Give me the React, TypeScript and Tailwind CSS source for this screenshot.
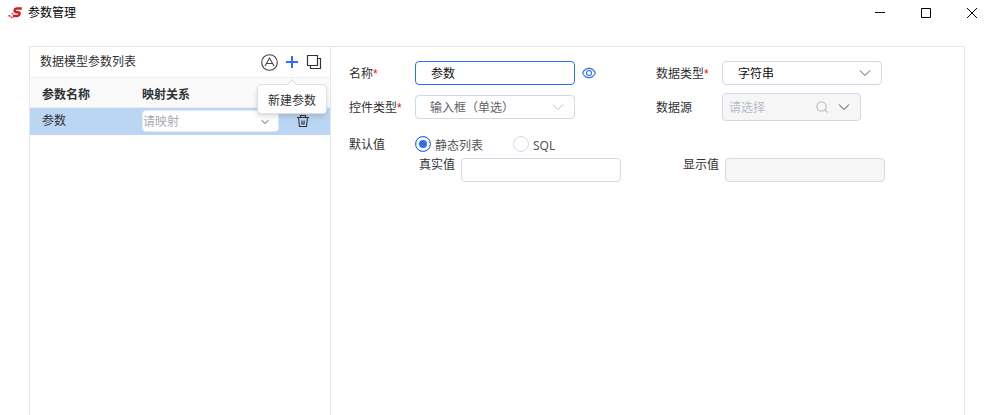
import { useState } from "react";
import type { ReactNode } from "react";
import clsx from "clsx";

type ChevronProps = { className?: string };

function Chevron({ className }: ChevronProps) {
  return (
    <svg viewBox="0 0 12 12" fill="none" stroke="currentColor" className={clsx("pointer-events-none", className)}>
      <path d="M1 3.5 6 8.5 11 3.5" />
    </svg>
  );
}

function Logo() {
  return (
    <svg width="14" height="14" viewBox="0 0 14 14" fill="none" aria-hidden="true">
      <path d="M13.8 2.4H8.6Q7 2.4 6.7 4T8 6.2H10.2Q11.9 6.2 11.5 8T9.6 10H5" stroke="#d01f26" strokeWidth="2.5" />
      <path d="M3.6 7h1.8v1.6H3.6zM.4 9h2v1.8h-2zM2.6 10.4h2v1.8h-2z" fill="#d8444a" />
    </svg>
  );
}

function TitleBar() {
  return (
    <header className="flex h-[25px] items-center justify-between pl-2 pr-[9px] text-black">
      <div className="flex items-center gap-1.5">
        <Logo />
        <h1 className="text-xs">参数管理</h1>
      </div>
      <div className="flex items-center gap-[26px]">
        <button type="button" aria-label="最小化" className="flex h-6 w-5 items-center justify-center">
          <svg width="10" height="10" viewBox="0 0 10 10" stroke="currentColor">
            <path d="M0 4.5h10" />
          </svg>
        </button>
        <button type="button" aria-label="最大化" className="flex h-6 w-5 items-center justify-center">
          <svg width="10" height="10" viewBox="0 0 10 10" fill="none" stroke="currentColor">
            <path d="M.5.5h9v9h-9z" />
          </svg>
        </button>
        <button type="button" aria-label="关闭" className="flex h-6 w-5 items-center justify-center">
          <svg width="10" height="10" viewBox="0 0 10 10" fill="none" stroke="currentColor">
            <path d="M0 0l10 10M10 0 0 10" />
          </svg>
        </button>
      </div>
    </header>
  );
}

function ParamList() {
  return (
    <aside className="w-[301px] shrink-0 border-r border-[#e4e7ed]">
      <div className="flex h-[31px] items-center justify-between border-b border-[#ebeef5] pl-2.5 pr-2">
        <h2>数据模型参数列表</h2>
        <div className="flex items-center gap-1.5">
          <button type="button" aria-label="自动映射">
            <svg width="17" height="17" viewBox="0 0 17 17" fill="none" stroke="#444">
              <circle cx="8.5" cy="8.5" r="7.8" strokeWidth="1.1" />
              <path d="M4 12 8.5 4l4.500 8M6 9.500h5" strokeWidth="1.1" />
            </svg>
          </button>
          <div className="relative flex">
            <button type="button" aria-label="新建" aria-describedby="create-tip" className="px-0.5">
              <svg width="12" height="12" viewBox="0 0 12 12" fill="none" stroke="#2f6bff" strokeWidth="2">
                <path d="M6 0v12M0 6h12" />
              </svg>
            </button>
            <div
              id="create-tip"
              role="tooltip"
              className="absolute left-1/2 top-full z-10 mt-4 -translate-x-1/2 whitespace-nowrap rounded border border-[#dcdfe6] bg-white px-2.5 pb-1 pt-2 text-xs leading-4 shadow-md"
            >
              <span className="absolute left-1/2 -top-1 size-2 -translate-x-1/2 rotate-45 border-l border-t border-[#dcdfe6] bg-white" />
              新建参数
            </div>
          </div>
          <button type="button" aria-label="复制">
            <svg width="16" height="16" viewBox="0 0 16 16" fill="none" stroke="#333" strokeWidth="1.2">
              <path d="M1.5 1.5h10v10h-10zM11.5 4.5h3v10h-10v-3" />
            </svg>
          </button>
        </div>
      </div>
      <table className="w-full table-fixed text-left">
        <thead>
          <tr className="h-[29px] border-b border-[#ebeef5] bg-[#fafafa]">
            <th className="w-28 pl-3 pt-1.5 font-bold">参数名称</th>
            <th className="pt-1.5 font-bold">映射关系</th>
            <th className="w-[51px]" aria-label="操作" />
          </tr>
        </thead>
        <tbody>
          <tr className="h-7 bg-[#bad6f3]">
            <td className="pl-3">参数</td>
            <td>
              <div className="relative">
                <select
                  aria-label="映射关系"
                  defaultValue=""
                  className="block h-[22px] w-full appearance-none rounded border border-[#e4e7ed] bg-white pt-0.5 text-[#a8abb2]"
                >
                  <option value="">请映射</option>
                </select>
                <Chevron className="absolute right-2.5 top-2 size-2 stroke-2 text-[#a0a3aa]" />
              </div>
            </td>
            <td className="pl-[17px]">
              <button type="button" aria-label="删除" className="block">
                <svg width="14" height="14" viewBox="0 0 14 14" fill="none" stroke="#333" strokeWidth="1.1">
                  <path d="M1 3.5h12M4.5 3.5v-2h5v2M2.5 3.5 3.5 12.5h7l1-9M5.9 6.5v3.500h2.200V6.500" />
                </svg>
              </button>
            </td>
          </tr>
        </tbody>
      </table>
    </aside>
  );
}

type FieldProps = {
  label: string;
  htmlFor: string;
  required?: boolean;
  children: ReactNode;
};

function Field({ label, htmlFor, required, children }: FieldProps) {
  return (
    <div className="flex items-center">
      <label htmlFor={htmlFor} className="w-[66px] shrink-0 pt-0.5">
        {label}
        {required && <span className="font-['Liberation_Sans',sans-serif] text-[#f00]">*</span>}
      </label>
      {children}
    </div>
  );
}

const control = "h-6 w-40 rounded border border-[#d5d8e6]";

function ParamForm() {
  const [name, setName] = useState("参数");
  const [source, setSource] = useState("static");

  const radioClass =
    "size-4 appearance-none rounded-full border border-[#d5d8e6] bg-white checked:border-[#2f6bff] checked:bg-[#2f6bff] checked:shadow-[inset_0_0_0_3px_white]";

  return (
    <form className="min-w-0 flex-1 px-[18px] pt-3.5">
      <div className="grid grid-cols-[307px_1fr] gap-y-2">
        <Field label="名称" htmlFor="name" required>
          <input
            id="name"
            value={name}
            onChange={(e) => setName(e.target.value)}
            className="h-6 w-40 rounded border border-[#2f6bff] px-[15px] text-[#111] outline-none"
          />
          <button type="button" aria-label="预览" className="ml-[7px]">
            <svg width="14" height="14" viewBox="0 0 14 14" fill="none" stroke="#2f6bff" strokeWidth="1.1">
              <path d="M.6 7C3.5.8 10.5.8 13.4 7 10.5 13.2 3.5 13.2.6 7z" />
              <circle cx="7" cy="7" r="2.5" />
            </svg>
          </button>
        </Field>
        <Field label="数据类型" htmlFor="data-type" required>
          <div className="relative">
            <select id="data-type" className={clsx(control, "block appearance-none bg-white px-[15px] pt-0.5 text-[#111]")}>
              <option>字符串</option>
            </select>
            <Chevron className="absolute right-[11px] top-1.5 size-3 text-[#555]" />
          </div>
        </Field>
        <Field label="控件类型" htmlFor="control-type" required>
          <div className="relative">
            <select id="control-type" className={clsx(control, "block appearance-none bg-white px-3.5 pt-0.5 text-[#606266]")}>
              <option>输入框（单选）</option>
            </select>
            <Chevron className="absolute right-[11px] top-1.5 size-3 text-[#b8bcc8]" />
          </div>
        </Field>
        <Field label="数据源" htmlFor="data-source">
          <div className="flex h-7 w-[139px] items-center rounded border border-[#d5d8e6] bg-[#f6f6f7]">
            <input
              id="data-source"
              disabled
              placeholder="请选择"
              className="min-w-0 flex-1 pl-1.5 pt-0.5 placeholder:text-[#b8bcc8]"
            />
            <svg width="12" height="12" viewBox="0 0 12 12" fill="none" stroke="#c0c4cc" strokeWidth="1.3">
              <circle cx="5.5" cy="5.5" r="4.6" />
              <path d="m9 9 2.5 2.5" />
            </svg>
            <Chevron className="mx-2.5 size-3 text-[#444]" />
          </div>
        </Field>
      </div>

      <fieldset className="mt-3.5 flex h-[18px] items-center">
        <legend className="float-left w-[66px] pt-0.5">默认值</legend>
        <label className="flex w-[98px] items-center gap-1 text-[#555]">
          <input
            type="radio"
            name="source"
            checked={source === "static"}
            onChange={() => setSource("static")}
            className={radioClass}
          />
          <span className="pt-1">静态列表</span>
        </label>
        <label className="flex items-center gap-1 text-[#555]">
          <input
            type="radio"
            name="source"
            checked={source === "sql"}
            onChange={() => setSource("sql")}
            className={radioClass}
          />
          <span className="pt-1">SQL</span>
        </label>
      </fieldset>

      <div className="mt-[5px] grid grid-cols-[307px_1fr]">
        <div className="flex items-start gap-1.5 pl-[70px]">
          <label htmlFor="real-value" className="leading-3.5">真实值</label>
          <input id="real-value" className={control} />
        </div>
        <div className="flex items-start gap-1.5 pl-[27px]">
          <label htmlFor="display-value" className="leading-3.5">显示值</label>
          <input id="display-value" disabled className={clsx(control, "bg-[#f6f6f7]")} />
        </div>
      </div>
    </form>
  );
}

export default function App() {
  return (
    <div className="flex min-h-screen flex-col bg-white font-['Noto_Sans','Noto_Sans_CJK_SC',sans-serif] text-xs text-[#303133]">
      <TitleBar />
      <main className="ml-[29px] mr-[26px] mt-[21px] flex flex-1 border-x border-t border-[#e4e7ed]">
        <ParamList />
        <ParamForm />
      </main>
    </div>
  );
}
